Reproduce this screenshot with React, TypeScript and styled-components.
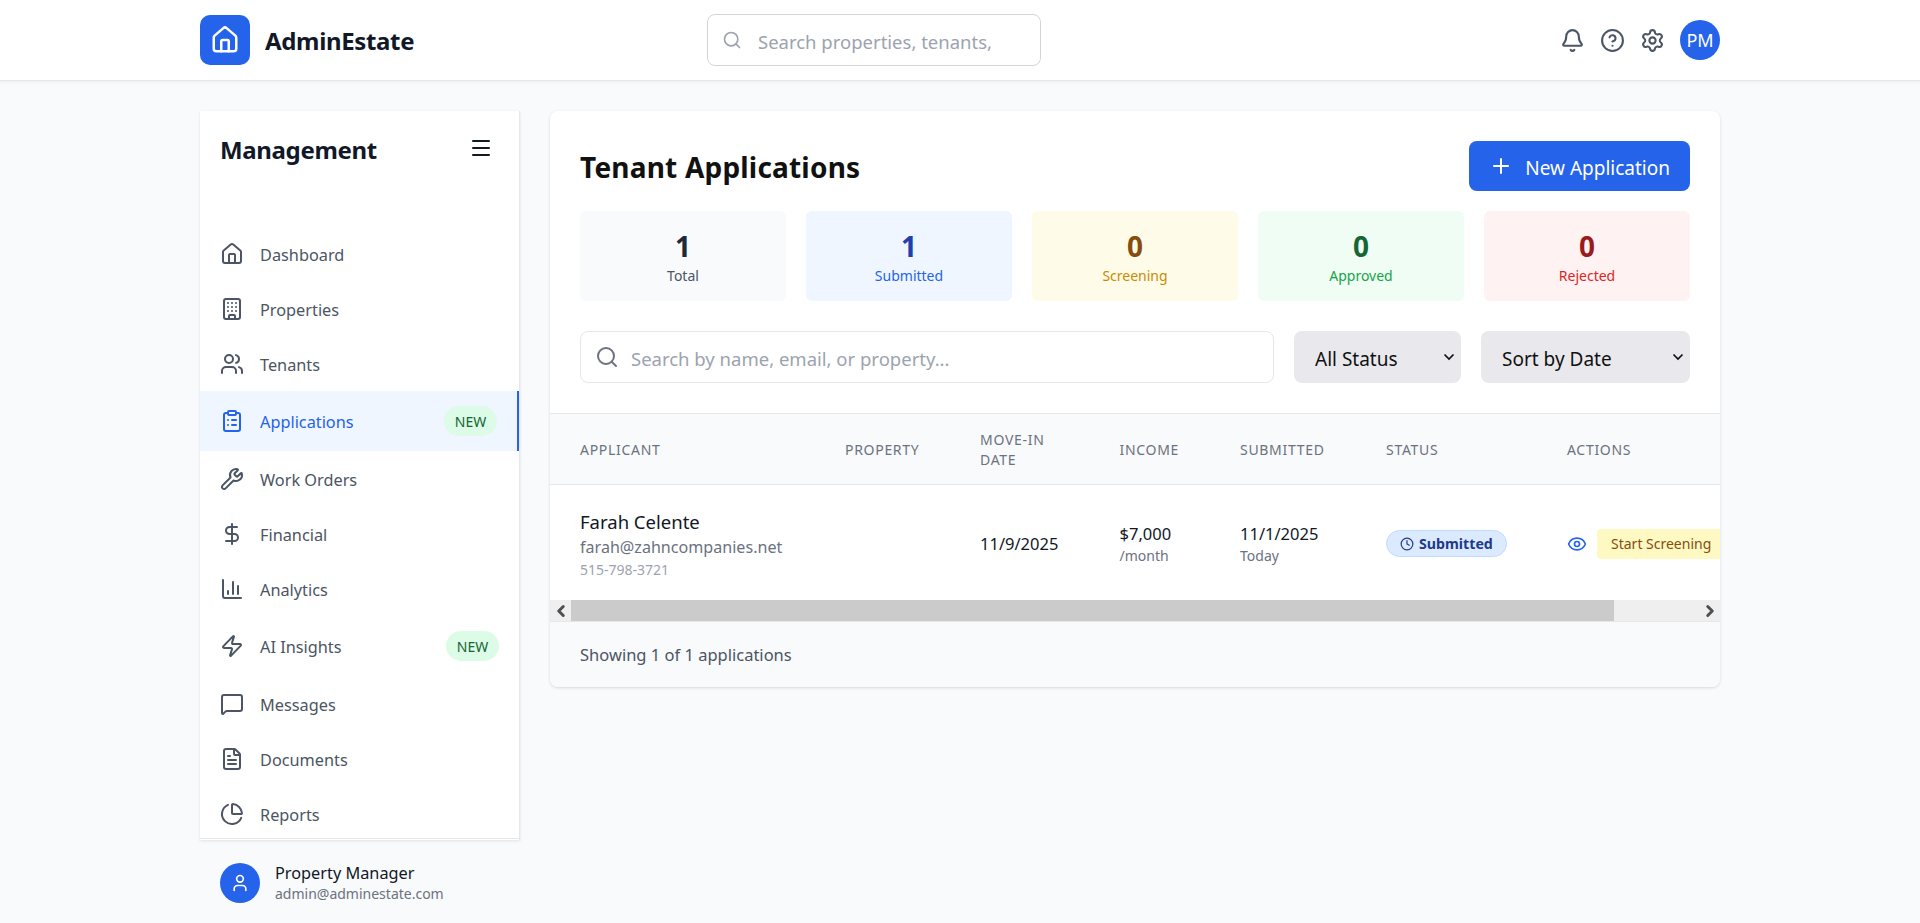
import React from 'react';
import styled, { createGlobalStyle } from 'styled-components';
import {
  Bell,
  Building,
  ChartColumn,
  ChartPie,
  ChevronLeft,
  ChevronRight,
  CircleHelp,
  ClipboardList,
  Clock,
  DollarSign,
  Eye,
  FileText,
  House,
  Menu,
  MessageSquare,
  Plus,
  Search,
  Settings,
  User,
  Users,
  Wrench,
  Zap,
} from 'lucide-react';

const GlobalStyle = createGlobalStyle`
  html, body {
    margin: 0;
    height: 100%;
    overflow: hidden;
    background: #f9fafb;
    font-family: "Noto Sans", "Open Sans", sans-serif;
    color: #111827;
  }
  * { box-sizing: border-box; }
`;

const chevron =
  "data:image/svg+xml,%3Csvg xmlns='http://www.w3.org/2000/svg' width='12' height='8' viewBox='0 0 12 8'%3E%3Cpath d='M1.5 1.5 6 6l4.5-4.5' fill='none' stroke='%23111' stroke-width='1.7'/%3E%3C/svg%3E";

const TopBar = styled.header`
  height: 81px;
  background: #fff;
  border-bottom: 1px solid #e5e7eb;
  box-shadow: 0 1px 3px rgba(0, 0, 0, 0.06);
`;

const TopBarInner = styled.div`
  width: 1520px;
  height: 80px;
  margin: 0 auto;
  display: flex;
  align-items: center;
`;

const Brand = styled.div`
  width: 507px;
  display: flex;
  align-items: center;
  gap: 15px;
`;

const LogoBox = styled.div`
  width: 50px;
  height: 50px;
  border-radius: 10px;
  background: #2563eb;
  color: #fff;
  display: flex;
  align-items: center;
  justify-content: center;
`;

const BrandName = styled.span`
  padding-top: 1px;
  font-size: 24px;
  font-weight: 700;
  letter-spacing: -0.35px;
  color: #111827;
`;

const GlobalSearch = styled.label`
  width: 334px;
  height: 52px;
  display: flex;
  align-items: center;
  gap: 16px;
  padding: 0 14px;
  background: #fff;
  border: 1px solid #d1d5db;
  border-radius: 8px;
  color: #9ca3af;
`;

const SearchInput = styled.input`
  flex: 1;
  min-width: 0;
  border: 0;
  outline: 0;
  padding: 2px 0 0;
  background: transparent;
  font: inherit;
  font-size: 18.5px;
  color: #111827;

  &::placeholder {
    color: #9ca3af;
    opacity: 1;
  }
`;

const TopActions = styled.div`
  margin-left: auto;
  display: flex;
  align-items: center;
  gap: 15px;
  color: #4b5563;

  svg {
    display: block;
  }
`;

const Avatar = styled.div<{ $size: number; $font?: number }>`
  flex: none;
  width: ${({ $size }) => $size}px;
  height: ${({ $size }) => $size}px;
  border-radius: 50%;
  background: #2563eb;
  color: #fff;
  font-size: ${({ $font }) => $font ?? 16}px;
  display: flex;
  align-items: center;
  justify-content: center;
`;

const Layout = styled.div`
  width: 1520px;
  margin: 30px auto 0;
  display: flex;
  align-items: flex-start;
  gap: 30px;
`;

const Sidebar = styled.aside`
  flex: none;
  width: 320px;
  height: 729px;
  display: flex;
  flex-direction: column;
  background: #fff;
  border-right: 1px solid #e5e7eb;
  box-shadow: 0 1px 3px rgba(0, 0, 0, 0.1);
`;

const SidebarHead = styled.div`
  flex: none;
  height: 115px;
  padding: 20px 26px 0 20px;
  display: flex;
  align-items: flex-start;
  justify-content: space-between;
`;

const SidebarTitle = styled.h2`
  margin: 0;
  font-size: 24px;
  line-height: 38px;
  font-weight: 700;
  letter-spacing: -0.35px;
  color: #111827;
`;

const MenuButton = styled.div`
  padding-top: 5px;
  color: #111827;
`;

const Nav = styled.nav`
  flex: none;
  height: 612px;
  overflow: hidden;
`;

const NavItem = styled.a<{ $active?: boolean; $badge?: boolean }>`
  display: flex;
  align-items: center;
  gap: 16px;
  height: ${({ $badge }) => ($badge ? 60 : 55)}px;
  padding: 0 20px;
  font-size: 16.3px;
  color: ${({ $active }) => ($active ? '#2563eb' : '#4b5563')};
  background: ${({ $active }) => ($active ? '#eff6ff' : 'transparent')};
  border-right: ${({ $active }) => ($active ? '2px solid #2563eb' : '0')};
`;

const NavLabel = styled.span`
  padding-top: 2px;
`;

const NewBadge = styled.span`
  margin-left: auto;
  width: 53px;
  height: 30px;
  border-radius: 15px;
  background: #dcfce7;
  color: #166534;
  font-size: 14px;
  display: flex;
  align-items: center;
  justify-content: center;
`;

const SidebarFoot = styled.div`
  flex: none;
  padding: 23px 20px;
  border-top: 1px solid #e5e7eb;
  display: flex;
  align-items: center;
  gap: 15px;
`;

const FootName = styled.div`
  font-size: 16.3px;
  line-height: 22px;
  color: #111827;
`;

const FootMail = styled.div`
  font-size: 14px;
  line-height: 20px;
  color: #6b7280;
`;

const Panel = styled.main`
  flex: 1;
  min-width: 0;
  background: #fff;
  border-radius: 8px;
  overflow: hidden;
  box-shadow: 0 1px 3px rgba(0, 0, 0, 0.14);
`;

const PanelTop = styled.div`
  padding: 30px 30px 30px;
`;

const TitleRow = styled.div`
  display: flex;
  align-items: center;
  justify-content: space-between;
  margin-bottom: 20px;
`;

const PageTitle = styled.h1`
  margin: 0;
  padding-top: 2px;
  font-size: 28px;
  font-weight: 700;
  letter-spacing: 0.2px;
  color: #111;
`;

const PrimaryButton = styled.button`
  height: 50px;
  display: flex;
  align-items: center;
  gap: 12px;
  padding: 0 20px;
  border: 0;
  border-radius: 8px;
  background: #2563eb;
  color: #fff;
  font: inherit;
  font-size: 19px;
`;

const ButtonLabel = styled.span`
  padding-top: 4px;
`;

const StatGrid = styled.div`
  display: grid;
  grid-template-columns: repeat(5, 1fr);
  gap: 20px;
  margin-bottom: 30px;
`;

const StatCard = styled.div<{ $bg: string }>`
  height: 90px;
  padding-top: 2px;
  border-radius: 6px;
  background: ${({ $bg }) => $bg};
  display: flex;
  flex-direction: column;
  align-items: center;
  justify-content: center;
`;

const StatValue = styled.div<{ $color: string }>`
  font-size: 28px;
  line-height: 36px;
  font-weight: 700;
  color: ${({ $color }) => $color};
`;

const StatLabel = styled.div<{ $color: string }>`
  margin-top: 2px;
  font-size: 14px;
  line-height: 20px;
  color: ${({ $color }) => $color};
`;

const FilterRow = styled.div`
  display: flex;
  gap: 20px;
`;

const FilterSearch = styled.label`
  flex: 1;
  height: 52px;
  display: flex;
  align-items: center;
  gap: 12px;
  padding: 0 14px;
  border: 1px solid #e5e7eb;
  border-radius: 8px;
  color: #6b7280;
`;

const FilterSelect = styled.select<{ $width: number }>`
  flex: none;
  width: ${({ $width }) => $width}px;
  height: 52px;
  padding: 4px 30px 0 21px;
  border: 0;
  border-radius: 8px;
  appearance: none;
  background: #e9e9ed url("${chevron}") no-repeat right 6px center;
  color: #111;
  font: inherit;
  font-size: 19px;
`;

const TableClip = styled.div`
  overflow: hidden;
  border-top: 1px solid #e5e7eb;
`;

const Table = styled.table`
  width: 1265px;
  table-layout: fixed;
  border-collapse: collapse;
`;

const HeadCell = styled.th`
  height: 70px;
  padding: 2px 20px 0 30px;
  background: #f9fafb;
  border-bottom: 1px solid #e5e7eb;
  text-align: left;
  font-size: 14px;
  line-height: 20px;
  font-weight: 400;
  letter-spacing: 0.7px;
  text-transform: uppercase;
  color: #6b7280;
`;

const BodyCell = styled.td`
  height: 116px;
  padding: 3px 0 0 30px;
  vertical-align: middle;
  font-size: 16.5px;
  color: #111827;
`;

const ApplicantName = styled.div`
  font-size: 18.5px;
  line-height: 27px;
  color: #111827;
`;

const ApplicantMail = styled.div`
  font-size: 16.1px;
  line-height: 25px;
  color: #6b7280;
`;

const ApplicantPhone = styled.div`
  font-size: 14px;
  line-height: 20px;
  color: #9ca3af;
`;

const CellSub = styled.div`
  font-size: 14px;
  line-height: 20px;
  color: #6b7280;
`;

const CellMain = styled.div`
  line-height: 24px;
`;

const StatusBadge = styled.span`
  display: inline-flex;
  align-items: center;
  gap: 5px;
  height: 27px;
  padding: 0 13px;
  border: 1px solid #bfdbfe;
  border-radius: 14px;
  background: #dbeafe;
  color: #1e3a8a;
  font-size: 14.2px;
  font-weight: 700;
`;

const ActionRow = styled.div`
  display: flex;
  align-items: center;
  gap: 10px;
  color: #2563eb;
`;

const ScreeningButton = styled.button`
  height: 30px;
  padding: 0 14px;
  border: 0;
  border-radius: 4px;
  background: #fef9c3;
  color: #854d0e;
  font: inherit;
  font-size: 14px;
  white-space: nowrap;
`;

const ScrollBar = styled.div`
  height: 21px;
  display: flex;
  background: #efefef;
  color: #505050;
`;

const ScrollArrow = styled.div`
  flex: none;
  width: 21px;
  display: flex;
  align-items: center;
  justify-content: center;
`;

const ScrollTrack = styled.div`
  flex: 1;
`;

const ScrollThumb = styled.div`
  height: 100%;
  background: #cbcbcb;
`;

const PanelFoot = styled.div`
  height: 66px;
  padding: 0 30px;
  display: flex;
  align-items: center;
  background: #f9fafb;
  border-top: 1px solid #e5e7eb;
  font-size: 16.5px;
  color: #4b5563;
`;

const navItems = [
  { label: 'Dashboard', icon: House },
  { label: 'Properties', icon: Building },
  { label: 'Tenants', icon: Users },
  { label: 'Applications', icon: ClipboardList, active: true, badge: true },
  { label: 'Work Orders', icon: Wrench },
  { label: 'Financial', icon: DollarSign },
  { label: 'Analytics', icon: ChartColumn },
  { label: 'AI Insights', icon: Zap, badge: true },
  { label: 'Messages', icon: MessageSquare },
  { label: 'Documents', icon: FileText },
  { label: 'Reports', icon: ChartPie },
];

const stats = [
  { label: 'Total', value: 1, bg: '#f9fafb', num: '#1f2937', text: '#4b5563' },
  { label: 'Submitted', value: 1, bg: '#eff6ff', num: '#1e40af', text: '#2563eb' },
  { label: 'Screening', value: 0, bg: '#fefce8', num: '#854d0e', text: '#ca8a04' },
  { label: 'Approved', value: 0, bg: '#f0fdf4', num: '#166534', text: '#16a34a' },
  { label: 'Rejected', value: 0, bg: '#fef2f2', num: '#991b1b', text: '#dc2626' },
];

const columns = [
  { label: 'Applicant', width: 265 },
  { label: 'Property', width: 135 },
  { label: 'Move-in Date', width: 139.5 },
  { label: 'Income', width: 120.5 },
  { label: 'Submitted', width: 146 },
  { label: 'Status', width: 181 },
  { label: 'Actions', width: 278 },
];

const App = () => (
  <>
    <GlobalStyle />
    <TopBar>
      <TopBarInner>
        <Brand>
          <LogoBox>
            <House size={30} />
          </LogoBox>
          <BrandName>AdminEstate</BrandName>
        </Brand>
        <GlobalSearch>
          <Search size={20} />
          <SearchInput placeholder="Search properties, tenants," />
        </GlobalSearch>
        <TopActions>
          <Bell size={25} />
          <CircleHelp size={25} />
          <Settings size={25} />
          <Avatar $size={40} $font={18}>PM</Avatar>
        </TopActions>
      </TopBarInner>
    </TopBar>
    <Layout>
      <Sidebar>
        <SidebarHead>
          <SidebarTitle>Management</SidebarTitle>
          <MenuButton>
            <Menu size={24} />
          </MenuButton>
        </SidebarHead>
        <Nav>
          {navItems.map(({ label, icon: Icon, active, badge }) => (
            <NavItem key={label} $active={active} $badge={badge}>
              <Icon size={24} />
              <NavLabel>{label}</NavLabel>
              {badge && <NewBadge>NEW</NewBadge>}
            </NavItem>
          ))}
        </Nav>
        <SidebarFoot>
          <Avatar $size={40}>
            <User size={20} />
          </Avatar>
          <div>
            <FootName>Property Manager</FootName>
            <FootMail>admin@adminestate.com</FootMail>
          </div>
        </SidebarFoot>
      </Sidebar>
      <Panel>
        <PanelTop>
          <TitleRow>
            <PageTitle>Tenant Applications</PageTitle>
            <PrimaryButton>
              <Plus size={24} />
              <ButtonLabel>New Application</ButtonLabel>
            </PrimaryButton>
          </TitleRow>
          <StatGrid>
            {stats.map((s) => (
              <StatCard key={s.label} $bg={s.bg}>
                <StatValue $color={s.num}>{s.value}</StatValue>
                <StatLabel $color={s.text}>{s.label}</StatLabel>
              </StatCard>
            ))}
          </StatGrid>
          <FilterRow>
            <FilterSearch>
              <Search size={24} />
              <SearchInput placeholder="Search by name, email, or property..." />
            </FilterSearch>
            <FilterSelect $width={167}>
              <option>All Status</option>
            </FilterSelect>
            <FilterSelect $width={209}>
              <option>Sort by Date</option>
            </FilterSelect>
          </FilterRow>
        </PanelTop>
        <TableClip>
          <Table>
            <colgroup>
              {columns.map((c) => (
                <col key={c.label} width={c.width} />
              ))}
            </colgroup>
            <thead>
              <tr>
                {columns.map((c) => (
                  <HeadCell key={c.label}>{c.label}</HeadCell>
                ))}
              </tr>
            </thead>
            <tbody>
              <tr>
                <BodyCell>
                  <ApplicantName>Farah Celente</ApplicantName>
                  <ApplicantMail>farah@zahncompanies.net</ApplicantMail>
                  <ApplicantPhone>515-798-3721</ApplicantPhone>
                </BodyCell>
                <BodyCell />
                <BodyCell>11/9/2025</BodyCell>
                <BodyCell>
                  <CellMain>$7,000</CellMain>
                  <CellSub>/month</CellSub>
                </BodyCell>
                <BodyCell>
                  <CellMain>11/1/2025</CellMain>
                  <CellSub>Today</CellSub>
                </BodyCell>
                <BodyCell>
                  <StatusBadge>
                    <Clock size={14} />
                    Submitted
                  </StatusBadge>
                </BodyCell>
                <BodyCell>
                  <ActionRow>
                    <Eye size={20} />
                    <ScreeningButton>Start Screening</ScreeningButton>
                  </ActionRow>
                </BodyCell>
              </tr>
            </tbody>
          </Table>
        </TableClip>
        <ScrollBar>
          <ScrollArrow>
            <ChevronLeft size={18} strokeWidth={4} />
          </ScrollArrow>
          <ScrollTrack>
            <ScrollThumb style={{ width: `${(1170 / 1265) * 100}%` }} />
          </ScrollTrack>
          <ScrollArrow>
            <ChevronRight size={18} strokeWidth={4} />
          </ScrollArrow>
        </ScrollBar>
        <PanelFoot>Showing 1 of 1 applications</PanelFoot>
      </Panel>
    </Layout>
  </>
);

export default App;
